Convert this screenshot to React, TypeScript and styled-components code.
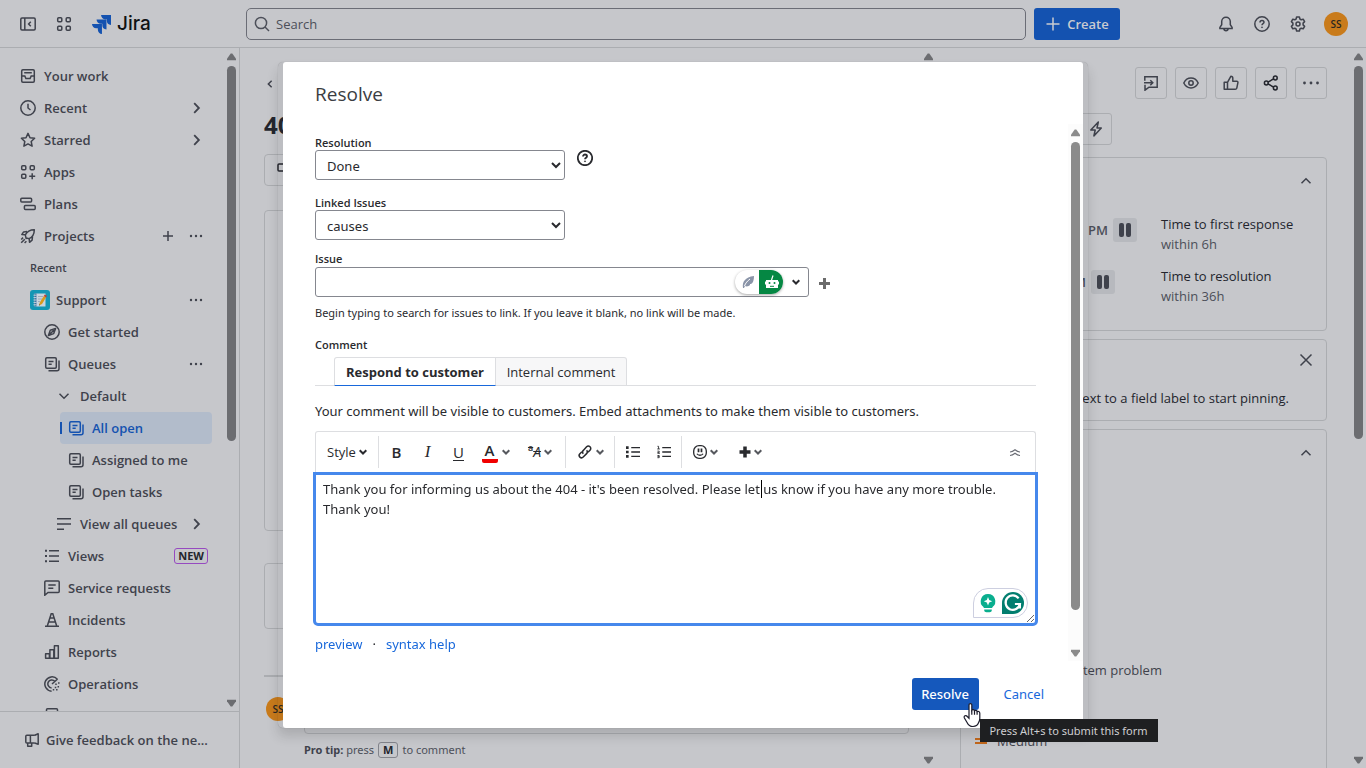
import React from "react";
import styled, { createGlobalStyle } from "styled-components";

const color = {
  page: "#c6c7cb",
  line: "#abadb1",
  text: "#23252d",
  subtle: "#3f424c",
  faint: "#4c4f59",
  blue: "#1452b0",
  orange: "#c97b1b",
  ink: "#292a2e",
  link: "#1868db",
};

const Global = createGlobalStyle`
  * { box-sizing: border-box; }
  body { margin: 0; background: ${color.page}; font-family: "Open Sans", "Noto Sans", sans-serif; font-size: 13px; line-height: 20px; color: ${color.text}; }
  button, input, select, textarea { font: inherit; color: inherit; }
  button { background: none; border: 0; padding: 0; }
  h1, h2, p, ul { margin: 0; padding: 0; }
  ul { list-style: none; }
  svg { display: block; flex: none; }
  a { text-decoration: none; color: ${color.link}; }
`;

/* ---------- icons ---------- */

const Svg = ({ size = 16, children, weight = 1.5, box = 16 }: { size?: number; children: React.ReactNode; weight?: number; box?: number }) => (
  <svg width={size} height={size} viewBox={`0 0 ${box} ${box}`} fill="none" stroke="currentColor" strokeWidth={weight} aria-hidden="true">
    {children}
  </svg>
);

const queue = (
  <>
    <rect x="1.7" y="1.7" width="10.6" height="10.6" rx="1.2" />
    <path d="M4.5 5.4h5M4.5 8.2h3.2M15 4.5v8.3a2 2 0 0 1-2 2H4.5" />
  </>
);

const glyphs: Record<string, React.ReactNode> = {
  collapse: (
    <>
      <rect x="0.8" y="2" width="14.4" height="12" rx="1.2" />
      <path d="M4.8 2v12M10.8 5.8 8.6 8l2.2 2.2" />
    </>
  ),
  grid: (
    <>
      <rect x="1.7" y="1.7" width="4.1" height="4.1" rx="1" />
      <rect x="10.2" y="1.7" width="4.1" height="4.1" rx="1" />
      <rect x="1.7" y="10.2" width="4.1" height="4.1" rx="1" />
      <rect x="10.2" y="10.2" width="4.1" height="4.1" rx="1" />
    </>
  ),
  apps: (
    <>
      <rect x="1.7" y="1.7" width="4.1" height="4.1" rx="1" />
      <rect x="10.2" y="1.7" width="4.1" height="4.1" rx="1" />
      <rect x="1.7" y="10.2" width="4.1" height="4.1" rx="1" />
      <path d="M12.2 9.2v6M9.2 12.2h6" />
    </>
  ),
  search: (
    <>
      <circle cx="7" cy="7" r="5.6" />
      <path d="m11 11 4 4" />
    </>
  ),
  plus: <path d="M8 1.5v13M1.5 8h13" />,
  plusSmall: <path d="M8 3v10M3 8h10" />,
  bell: <path d="M8 1.2a4.3 4.3 0 0 0-4.3 4.3v3.2L1.9 11.4v1h12.2v-1l-1.8-2.7V5.5A4.3 4.3 0 0 0 8 1.2ZM5.8 12.6c.2 1.4 1 2.1 2.2 2.1s2-.7 2.2-2.1" />,
  help: (
    <>
      <circle cx="8" cy="8" r="7.2" />
      <path d="M6 6.4c0-1.1.9-1.9 2-1.9s2 .7 2 1.8C10 7.800 8 7.600 8 9.300" />
      <circle cx="8" cy="11.300" r=".5" fill="currentColor" strokeWidth=".8" />
    </>
  ),
  gear: (
    <>
      <path d="M6.600 1h2.800l.5 2 1.300.8 2-.6 1.400 2.400L13.100 7.100v1.800l1.500 1.500-1.400 2.400-2-.6-1.300.8-.5 2H6.600l-.5-2-1.300-.8-2 .6-1.400-2.400 1.500-1.500V7.100L1.400 5.600l1.400-2.400 2 .6L6.100 3Z" strokeLinejoin="round" />
      <circle cx="8" cy="8" r="2" />
    </>
  ),
  work: (
    <>
      <rect x="1.700" y="1.700" width="12.600" height="12.600" rx="1.200" />
      <path d="M4.200 4.700h7.600M1.700 8h3.100l1.100 2.600h4.200L11.200 8h3.100" />
    </>
  ),
  clock: (
    <>
      <circle cx="8" cy="8" r="7.200" />
      <path d="M8 3.800V8l2.500 2" />
    </>
  ),
  star: <path d="m8 1.400 2 4.300 4.600.6-3.400 3.200.9 4.700L8 11.900l-4.100 2.300.9-4.700L1.400 6.300 6 5.700Z" strokeLinejoin="round" />,
  plans: (
    <>
      <rect x="0.800" y="2.200" width="10.800" height="3.800" rx="1" />
      <rect x="4.400" y="9.600" width="10.800" height="3.800" rx="1" />
    </>
  ),
  rocket: (
    <>
      <path d="M6.100 10.400 5.300 6.900C7 3.400 9.600 1.700 14.300 1.700c0 4.700-1.700 7.300-5.200 9l-3-.8ZM5.300 6.800l-3.500-.2 1.800-2.700 3.400-.3M9.200 10.700l.3 3.600 2.600-2.100.4-3.500" strokeLinejoin="round" />
      <path d="M1.200 14.800l3.600-3.600M1.200 11.500l1.900-1.900M4.600 15l1.800-1.800" />
    </>
  ),
  compass: (
    <>
      <circle cx="8" cy="8" r="7.200" />
      <path d="m11.600 4.400-1.900 5.200-5.300 2 1.900-5.300ZM5 11l5-5" strokeLinejoin="round" />
    </>
  ),
  queue,
  lines: <path d="M1 2.700h14M1 8h14M1 13.300h7" />,
  list: (
    <>
      <path d="M5 2.700h10M5 8h10M5 13.300h10" />
      <path d="M1 2.700h2M1 8h2M1 13.300h2" strokeWidth="2" />
    </>
  ),
  chat: <path d="M1.800.9h12.400c.6 0 1 .4 1 1v9.600c0 .6-.4 1-1 1H4L.8 15.200V1.900c0-.6.4-1 1-1ZM4.300 5h7.400M4.300 8.300h5" />,
  cone: <path d="M1 14.200h14M3.300 14 7.200 1.800h1.600L12.700 14M5.800 6h4.400M4.600 10h6.800" />,
  bars: <path d="M1.600 14.200V9.800h3.800v4.400ZM5.900 14.200V5.800h3.900v8.400ZM10.400 14.200V1.800h3.900v12.400Z" strokeLinejoin="round" />,
  radar: (
    <>
      <path d="M13.400 3.200A7.200 7.200 0 1 0 7.600 15.200M10.800 5.200A4 4 0 1 0 7.600 11.900M8 8l5.600-5" />
      <path d="M14.800 6.300v1.400M12 7.500v1.400M14.300 10v1.400M11.500 10.800v1.400M12.800 13v1.400M9.500 13v1.400" />
    </>
  ),
  form: <rect x="2.500" y="0.800" width="11" height="13" rx="1" />,
  megaphone: <path d="M10.700 3.300 14.200 1.700v10.600l-3.500-1.300M10.700 3.300H2.800c-.6 0-1 .4-1 1V10c0 .6.400 1 1 1h7.900M6.400 3.300v7.700M3.700 11v3.300h4v-3.200" strokeLinejoin="round" />,
  right: <path d="M6.200 3.200 10.900 8l-4.700 4.800" strokeWidth="1.800" />,
  left: <path d="M10.200 3.600 5.800 8l4.400 4.400" />,
  down: <path d="M3.500 5.800 8 10.300l4.500-4.500" />,
  up: <path d="M3.500 10.200 8 5.700l4.500 4.500" />,
  dots: (
    <g fill="currentColor" stroke="none">
      <circle cx="3" cy="8" r="1.200" />
      <circle cx="8" cy="8" r="1.200" />
      <circle cx="13" cy="8" r="1.200" />
    </g>
  ),
  dotsWide: (
    <g fill="currentColor" stroke="none">
      <circle cx="1.500" cy="8" r="1.400" />
      <circle cx="8" cy="8" r="1.400" />
      <circle cx="14.500" cy="8" r="1.400" />
    </g>
  ),
  feedback: <path d="M1.800 5.800v-4h12.400v10.400H6L2 15.200V9.800M1 7.800h8.500M7.300 5.300l2.500 2.500-2.500 2.500" />,
  eye: (
    <>
      <path d="M.8 8c1.600-3.200 4-4.900 7.200-4.900S13.600 4.800 15.200 8c-1.600 3.200-4 4.900-7.200 4.900S2.400 11.200.8 8Z" />
      <circle cx="8" cy="8" r="2.200" />
    </>
  ),
  thumb: <path d="M1.200 7.300h3.300v7H1.200ZM4.500 7.300l3.300-6c1.300 0 2 .8 2 2v2.900h4c.8 0 1.300.7 1.100 1.500l-1.100 5.400c-.2.700-.7 1.200-1.500 1.200H4.500" strokeLinejoin="round" />,
  share: (
    <g color={color.text} stroke="currentColor">
      <circle cx="3.300" cy="8" r="1.900" />
      <circle cx="12.300" cy="3" r="1.900" />
      <circle cx="12.300" cy="13" r="1.900" />
      <path d="m5 7.100 5.600-3.200M5 8.900l5.600 3.200" />
    </g>
  ),
  bolt: <path d="M10.300 1 2.800 9h4.400L5.900 15l7.400-8H9Z" strokeLinejoin="round" />,
  close: <path d="m2.500 2.500 11 11M13.500 2.500l-11 11" />,
};

const Icon = ({ name, size, weight }: { name: string; size?: number; weight?: number }) => (
  <Svg size={size} weight={weight}>{glyphs[name]}</Svg>
);

const Caret = () => (
  <Svg size={8} box={8} weight={2}>
    <path d="M.7 2.300 4 5.500l3.300-3.200" />
  </Svg>
);

/* ---------- scroll bars ---------- */

const Track = styled.div<{ $tint?: string }>`
  display: flex;
  flex-direction: column;
  align-items: center;
  justify-content: space-between;
  flex: none;
  width: 15px;
  padding: 5px 0 4px;
  background: ${(p) => p.$tint || "transparent"};
  color: ${(p) => (p.$tint ? "#8b8b8b" : "#6c6d71")};
`;
const TrackTop = styled.div`
  display: flex;
  flex-direction: column;
  align-items: center;
  flex: 1;
  gap: 5px;
`;
const Thumb = styled.div<{ $share: number }>`
  width: 9px;
  height: ${(p) => p.$share}%;
  border-radius: 5px;
  background: currentColor;
`;
const Arrow = ({ down }: { down?: boolean }) => (
  <svg width="9" height="8" viewBox="0 0 9 8" fill="currentColor" aria-hidden="true">
    <path d={down ? "M0 0.800h9v1.400L5.300 7.400H3.700L0 2.200Z" : "M0 7.200h9V5.800L5.300.6H3.700L0 5.800Z"} />
  </svg>
);
const Scroller = ({ share, tint }: { share: number; tint?: string }) => (
  <Track $tint={tint} aria-hidden="true">
    <TrackTop>
      <Arrow />
      {share > 0 && <Thumb $share={share} />}
    </TrackTop>
    <Arrow down />
  </Track>
);

/* ---------- shell ---------- */

const Shell = styled.div`
  display: flex;
  flex-direction: column;
  height: 100vh;
  overflow: hidden;
  background: ${color.page};
`;
const Top = styled.header`
  display: grid;
  grid-template-columns: 1fr minmax(0, 874px) 1fr;
  align-items: center;
  flex: none;
  height: 48px;
  border-bottom: 1px solid ${color.line};
`;
const TopLeft = styled.div`
  display: flex;
  align-items: center;
  gap: 20px;
  padding-left: 20px;
  color: ${color.subtle};
`;
const Brand = styled.a`
  display: flex;
  align-items: center;
  gap: 6px;
  padding-top: 1px;
  color: #101214;
  font: 500 19px/24px Inter, sans-serif;
`;
const TopMid = styled.div`
  display: flex;
  gap: 8px;
`;
const SearchBox = styled.label`
  display: flex;
  align-items: center;
  gap: 6px;
  flex: 1;
  height: 32px;
  padding: 0 7px;
  border: 1px solid #6b6d76;
  border-radius: 5px;
  color: ${color.faint};
  input {
    flex: 1;
    padding: 0;
    border: 0;
    outline: 0;
    background: none;
  }
  input::placeholder {
    color: ${color.faint};
  }
`;
const Create = styled.button`
  display: flex;
  align-items: center;
  justify-content: center;
  gap: 6px;
  width: 86px;
  height: 32px;
  border-radius: 3px;
  background: ${color.blue};
  color: #c9cbd0;
  font-weight: 600;
`;
const TopRight = styled.div`
  display: flex;
  align-items: center;
  justify-content: flex-end;
  gap: 18px;
  padding-right: 18px;
  color: ${color.subtle};
`;
const TopIcons = styled.div`
  display: flex;
  gap: 20px;
`;
const Avatar = styled.span`
  display: grid;
  place-items: center;
  flex: none;
  width: 24px;
  height: 24px;
  border-radius: 50%;
  background: ${color.orange};
  color: #2b2620;
  font-size: 10px;
  font-weight: 600;
`;
const Columns = styled.div`
  display: flex;
  flex: 1;
  min-height: 0;
`;

/* ---------- sidebar ---------- */

const Side = styled.aside`
  display: flex;
  flex-direction: column;
  flex: none;
  width: 240px;
  border-right: 1px solid ${color.line};
  color: ${color.subtle};
  font-weight: 600;
`;
const SideScroll = styled.div`
  display: flex;
  flex: 1;
  min-height: 0;
`;
const Nav = styled.nav`
  flex: 1;
  min-width: 0;
  overflow: hidden;
  padding: 12px 12px 0;
`;
const Row = styled.li<{ $indent: number; $gap?: number }>`
  display: flex;
  align-items: center;
  height: 32px;
  padding: 0 4px 0 ${(p) => p.$indent}px;
  a {
    display: flex;
    align-items: center;
    gap: ${(p) => p.$gap || 8}px;
    flex: 1;
    color: inherit;
    white-space: nowrap;
  }
`;
const Current = styled(Row)`
  position: relative;
  margin-left: 48px;
  border-radius: 4px;
  background: #b2bccb;
  color: ${color.blue};
  &::before {
    content: "";
    position: absolute;
    left: 0;
    top: 10px;
    width: 2px;
    height: 12px;
    background: currentColor;
  }
`;
const Caption = styled.li`
  height: 32px;
  padding-left: 18px;
  font-size: 11px;
  line-height: 32px;
`;
const Action = styled.button`
  display: grid;
  place-items: center;
  width: 24px;
  height: 24px;
  margin-left: 4px;
`;
const Badge = styled.span`
  padding: 0 3px;
  border: 1px solid #964ac0;
  border-radius: 3px;
  color: ${color.text};
  font-size: 11px;
  font-weight: 700;
  line-height: 14px;
`;
const SideFoot = styled.footer`
  display: flex;
  align-items: center;
  flex: none;
  gap: 6px;
  height: 57px;
  padding-left: 24px;
  border-top: 1px solid ${color.line};
`;

type Item = { label: string; icon: string; indent: number; gap?: number; acts?: string[]; badge?: string };
const head: Item[] = [
  { label: "Your work", icon: "work", indent: 8 },
  { label: "Recent", icon: "clock", indent: 8, acts: ["right"] },
  { label: "Starred", icon: "star", indent: 8, acts: ["right"] },
  { label: "Apps", icon: "apps", indent: 8 },
  { label: "Plans", icon: "plans", indent: 8 },
  { label: "Projects", icon: "rocket", indent: 8, acts: ["plusSmall", "dots"] },
];
const before: Item[] = [
  { label: "Support", icon: "notebook", indent: 18, gap: 6, acts: ["dots"] },
  { label: "Get started", icon: "compass", indent: 32 },
  { label: "Queues", icon: "queue", indent: 32, acts: ["dots"] },
  { label: "Default", icon: "down", indent: 44 },
];
const after: Item[] = [
  { label: "Assigned to me", icon: "queue", indent: 56 },
  { label: "Open tasks", icon: "queue", indent: 56 },
  { label: "View all queues", icon: "lines", indent: 44, acts: ["right"] },
  { label: "Views", icon: "list", indent: 32, badge: "NEW" },
  { label: "Service requests", icon: "chat", indent: 32 },
  { label: "Incidents", icon: "cone", indent: 32 },
  { label: "Reports", icon: "bars", indent: 32 },
  { label: "Operations", icon: "radar", indent: 32 },
  { label: "", icon: "form", indent: 32 },
];

const Notebook = () => (
  <svg width="20" height="20" viewBox="0 0 20 20" aria-hidden="true">
    <rect width="20" height="20" rx="3" fill="#1396b4" />
    <path d="M4.500 3.500h11v13h-11z" fill="#c9d4de" />
    <path d="M4.500 3.500h2v13h-2z" fill="#3b6f9e" />
    <path d="M3.500 5.200h3M3.500 7.600h3M3.500 10h3M3.500 12.400h3M3.500 14.800h3" stroke="#e4e6ea" strokeWidth=".8" />
    <path d="M8 6.500h5M8 9h4M8 11.500h2" stroke="#8b98a8" strokeWidth=".7" />
    <path d="m9 15.500.8-3 4-6.500 2.200 1.400-4 6.500Z" fill="#d99a1c" />
    <path d="m13.800 6 1-1.600 2.200 1.400-1 1.600Z" fill="#b8423a" />
    <path d="m9 15.500.3-1.200.9.600Z" fill="#333" />
  </svg>
);

const NavRow = ({ item }: { item: Item }) => (
  <Row $indent={item.indent} $gap={item.gap}>
    <a href="#" aria-label={item.label || "Forms"}>
      {item.icon === "notebook" ? <Notebook /> : <Icon name={item.icon} />}
      {item.label}
    </a>
    {item.badge && <Badge>{item.badge}</Badge>}
    {item.acts?.map((a) => (
      <Action key={a} aria-label={a}>
        <Icon name={a} />
      </Action>
    ))}
  </Row>
);

const Sidebar = () => (
  <Side>
    <SideScroll>
      <Nav>
        <ul>
          {head.map((i) => <NavRow key={i.label} item={i} />)}
          <Caption>Recent</Caption>
          {before.map((i) => <NavRow key={i.label} item={i} />)}
          <Current $indent={8}>
            <a href="#" aria-current="page">
              <Icon name="queue" />
              All open
            </a>
          </Current>
          {after.map((i) => <NavRow key={i.label} item={i} />)}
        </ul>
      </Nav>
      <Scroller share={58} />
    </SideScroll>
    <SideFoot>
      <Icon name="megaphone" />
      Give feedback on the ne...
    </SideFoot>
  </Side>
);

/* ---------- ticket behind the dialog ---------- */

const Ticket = styled.main`
  flex: 1;
  min-width: 0;
  overflow: hidden;
  padding: 24px 12px 0 24px;
`;
const Back = styled.button`
  display: block;
  width: 12px;
  height: 24px;
  overflow: hidden;
  color: ${color.subtle};
`;
const Title = styled.h1`
  margin: 12px 0;
  font-size: 24px;
  font-weight: 700;
  line-height: 34px;
`;
const Box = styled.section<{ $h: number; $gap: number }>`
  height: ${(p) => p.$h}px;
  margin-bottom: ${(p) => p.$gap}px;
  padding-left: 12px;
  border: 1px solid ${color.line};
  border-radius: 4px;
`;
const BoxIcon = styled.span`
  display: block;
  padding-top: 7px;
`;
const Composer = styled.div`
  display: flex;
  align-items: flex-start;
  gap: 14px;
  height: 58px;
  padding: 20px 0 0 2px;
  border-top: 2px solid ${color.line};
`;
const ComposerBox = styled.div`
  flex: 1;
  height: 37px;
  border: 1px solid ${color.line};
  border-radius: 4px;
`;
const Tip = styled.p`
  display: flex;
  align-items: center;
  gap: 4px;
  margin: 7px 0 0 40px;
  color: ${color.faint};
  font-family: "Noto Sans", sans-serif;
  font-size: 11px;
  b {
    color: ${color.subtle};
  }
`;
const Key = styled.kbd`
  padding: 0 4px;
  border: 1px solid #82848b;
  border-radius: 3px;
  color: ${color.text};
  font: 700 11px/14px "Open Sans", sans-serif;
`;

const Details = styled.section`
  flex: none;
  width: 415px;
  overflow: hidden;
  padding: 19px 24px 0;
`;
const Tools = styled.div<{ $start?: boolean }>`
  display: flex;
  justify-content: ${(p) => (p.$start ? "flex-start" : "flex-end")};
  gap: 8px;
  padding-left: ${(p) => (p.$start ? 120 : 0)}px;
  margin-bottom: ${(p) => (p.$start ? 12 : 14)}px;
`;
const Tool = styled.button`
  display: grid;
  place-items: center;
  width: 32px;
  height: 32px;
  border: 1px solid ${color.line};
  border-radius: 3px;
  color: ${color.subtle};
`;
const Card = styled.section<{ $h: number }>`
  height: ${(p) => p.$h}px;
  margin-bottom: 8px;
  border: 1px solid ${color.line};
  border-radius: 4px;
`;
const CardHead = styled.div<{ $h: number }>`
  display: flex;
  align-items: center;
  justify-content: flex-end;
  height: ${(p) => p.$h}px;
  padding-right: 12px;
  color: ${color.subtle};
`;
const Slas = styled.div`
  display: grid;
  gap: 12px;
  padding-top: 10px;
`;
const Sla = styled.div`
  display: grid;
  grid-template-columns: 185px 1fr;
  margin-left: 15px;
  color: ${color.faint};
  b {
    display: block;
    color: ${color.text};
    font-weight: 400;
  }
`;
const Clock = styled.div<{ $w: number }>`
  display: flex;
  align-items: center;
  justify-content: flex-end;
  align-self: start;
  gap: 5px;
  width: ${(p) => p.$w}px;
  padding-top: 4px;
  font-weight: 600;
`;
const Pause = styled.span`
  display: flex;
  align-items: center;
  justify-content: center;
  gap: 2px;
  width: 24px;
  height: 24px;
  border-radius: 3px;
  background: #b7b9be;
  i {
    width: 5px;
    height: 14px;
    border-radius: 2px;
    background: ${color.subtle};
  }
`;
const Hint = styled.p`
  padding: 8px 37px 0 15px;
  text-align: right;
  white-space: nowrap;
`;
const Fact = styled.p<{ $top: number }>`
  display: flex;
  align-items: center;
  gap: 10px;
  height: 20px;
  margin-top: ${(p) => p.$top}px;
  padding-left: 14px;
  color: ${color.subtle};
`;

/* ---------- dialog ---------- */

const Overlay = styled.div`
  position: fixed;
  inset: 0;
  display: flex;
  justify-content: center;
  align-items: flex-start;
  padding-top: 62px;
`;
const Frame = styled.div`
  width: 810px;
  padding: 0 5px;
  border-radius: 5px;
  background: rgba(30, 31, 33, 0.05);
  box-shadow: 0 8px 12px rgba(30, 31, 33, 0.16), 0 0 1px rgba(30, 31, 33, 0.3);
`;
const Dialog = styled.form`
  border-radius: 3px;
  background: #fff;
  color: ${color.ink};
  font-family: "Noto Sans", "Open Sans", sans-serif;
`;
const DialogTitle = styled.h2`
  padding: 20px 32px 18px;
  color: #3b3d42;
  font-family: "Open Sans", sans-serif;
  font-size: 19px;
  font-weight: 400;
  line-height: 24px;
`;
const DialogBody = styled.div`
  display: flex;
`;
const Fields = styled.div`
  flex: 1;
  min-width: 0;
  padding: 12px 32px 7px;
`;
const Label = styled.label`
  display: block;
  font-family: "Open Sans", sans-serif;
  font-size: 11px;
  font-weight: 600;
  line-height: 14px;
`;
const Line = styled.div<{ $bottom: number }>`
  display: flex;
  gap: 12px;
  margin-bottom: ${(p) => p.$bottom}px;
`;
const Select = styled.select`
  width: 250px;
  height: 30px;
  padding: 2px 0 0 7px;
  border: 1px solid #85878f;
  border-radius: 3px;
  background-color: #fff;
`;
const Picker = styled.div`
  position: relative;
  width: 494px;
  margin-top: 1px;
  input {
    display: block;
    width: 100%;
    height: 30px;
    padding: 0 80px 0 8px;
    border: 1px solid #85878f;
    border-radius: 3px;
    outline: 0;
  }
`;
const PickerExtras = styled.div`
  position: absolute;
  top: 3px;
  right: 9px;
  display: flex;
  align-items: center;
  gap: 9px;
`;
const Pill = styled.span`
  display: flex;
  overflow: hidden;
  height: 24px;
  border-radius: 12px;
  background: #fff;
  box-shadow: 0 1px 3px rgba(0, 0, 0, 0.35);
`;
const AddIssue = styled.button`
  display: grid;
  place-items: center;
  width: 11px;
  margin: 4px 0 0 -2px;
  color: #6b6b6b;
`;
const Helper = styled.p`
  margin: 8px 0 17px;
  font-size: 11px;
  line-height: 16px;
`;
const Tabs = styled.div`
  display: flex;
  height: 29px;
  margin-top: 5px;
  padding-left: 19px;
  border-bottom: 1px solid #dddee1;
  font-family: "Open Sans", sans-serif;
`;
const Tab = styled.button<{ $on?: boolean }>`
  height: 29px;
  width: ${(p) => (p.$on ? 162 : 131)}px;
  border: 1px solid #dddee1;
  border-left-width: ${(p) => (p.$on ? 1 : 0)}px;
  border-bottom-color: ${(p) => (p.$on ? "#1868db" : "#dddee1")};
  border-radius: ${(p) => (p.$on ? "3px 0 0 0" : "0 3px 0 0")};
  background: ${(p) => (p.$on ? "#fff" : "#f7f7f8")};
  font-weight: ${(p) => (p.$on ? 700 : 400)};
`;
const Notice = styled.p`
  margin: 15px 0 10px;
`;
const Toolbar = styled.div`
  display: flex;
  align-items: center;
  height: 41px;
  border: 1px solid #dddee1;
  border-bottom: 0;
  border-radius: 3px 3px 0 0;
`;
const Group = styled.div<{ $pad?: number }>`
  display: flex;
  align-items: center;
  height: 32px;
  padding: 0 ${(p) => p.$pad ?? 2}px;
  & + & {
    border-left: 1px solid #dddee1;
  }
`;
const Format = styled.button<{ $w: number }>`
  display: flex;
  align-items: center;
  justify-content: center;
  gap: 3px;
  width: ${(p) => p.$w}px;
  height: 30px;
  color: ${color.ink};
  font-family: "Open Sans", sans-serif;
  svg:last-child:not(:only-child) {
    color: #56585e;
  }
`;
const Letter = styled.span<{ $kind: "bold" | "italic" | "underline" }>`
  font: ${(p) => (p.$kind === "italic" ? "italic 400 17px/20px 'Liberation Serif', serif" : "600 15px/16px 'Open Sans', sans-serif")};
  font-weight: ${(p) => (p.$kind === "bold" ? 600 : 400)};
  border-bottom: ${(p) => (p.$kind === "underline" ? "1px solid currentColor" : "0")};
`;
const ColorLetter = styled.span`
  width: 16px;
  margin-right: 1px;
  border-bottom: 4px solid #f00000;
  border-radius: 2px;
  font: 600 15px/17px "Open Sans", sans-serif;
`;
const SmallLetter = styled.span`
  display: flex;
  align-items: flex-start;
  text-decoration: line-through;
  font: italic 400 14px/18px "Open Sans", sans-serif;
  sup {
    font: 600 9px/10px "Open Sans", sans-serif;
  }
`;
const Fold = styled.button`
  margin-left: auto;
  padding-right: 14px;
  color: #6b6e76;
`;
const Editor = styled.div`
  position: relative;
  margin: 0 -2px;
  textarea {
    display: block;
    width: 100%;
    height: 154px;
    padding: 4px 7px;
    border: 3px solid #4688ec;
    border-radius: 0 0 5px 5px;
    outline: 0;
    background: #fff;
    resize: both;
  }
`;
const TextCaret = styled.span`
  position: absolute;
  left: 448px;
  top: 8px;
  width: 1px;
  height: 18px;
  background: #000;
`;
const Assist = styled.div`
  position: absolute;
  right: 10px;
  bottom: 8px;
  display: flex;
  align-items: center;
  gap: 5px;
  height: 30px;
  padding: 0 3px 0 5px;
  border: 1px solid #cdcfe0;
  border-radius: 15px 15px 15px 0;
  background: #fff;
`;
const Links = styled.p`
  display: flex;
  gap: 10px;
  margin-top: 8px;
`;
const DialogFoot = styled.footer`
  display: flex;
  align-items: center;
  justify-content: flex-end;
  gap: 25px;
  padding: 17px 39px 18px;
`;
const SubmitWrap = styled.div`
  position: relative;
`;
const Submit = styled.button`
  display: block;
  width: 67px;
  height: 32px;
  border-radius: 3px;
  background: #1558bc;
  color: #fff;
  font-weight: 500;
`;
const Pointer = styled.svg`
  position: absolute;
  left: 51px;
  top: 25px;
  z-index: 2;
`;
const Tooltip = styled.span`
  position: absolute;
  left: 68px;
  top: 41px;
  width: 178px;
  height: 23px;
  background: #1e1f21;
  color: #ceced2;
  font-size: 11px;
  line-height: 23px;
  text-align: center;
  white-space: nowrap;
`;

const message =
  "Thank you for informing us about the 404 - it's been resolved. Please let us know if you have any more trouble.\nThank you!";

const ResolveDialog = () => (
  <Overlay>
    <Frame>
      <Dialog role="dialog" aria-labelledby="dialog-title" onSubmit={(e) => e.preventDefault()}>
        <DialogTitle id="dialog-title">Resolve</DialogTitle>
        <DialogBody>
          <Fields>
            <Label htmlFor="resolution">Resolution</Label>
            <Line $bottom={16}>
              <Select id="resolution" defaultValue="Done">
                <option>Done</option>
              </Select>
              <Icon name="help" weight={1.800} />
            </Line>
            <Label htmlFor="linked">Linked Issues</Label>
            <Line $bottom={12}>
              <Select id="linked" defaultValue="causes">
                <option>causes</option>
              </Select>
            </Line>
            <Label htmlFor="issue">Issue</Label>
            <Line $bottom={0}>
              <Picker>
                <input id="issue" type="text" />
                <PickerExtras>
                  <Pill>
                    <svg width="24" height="24" viewBox="0 0 24 24" aria-hidden="true">
                      <path d="M8 18c-1-6 2-11 11-12 0 4-1 7-3 8l-1 0 0 1c-1 1-3 2-5 1l-1 2Z" fill="#8a94a8" />
                      <path d="M9.500 16c1-3 3-5 5.500-7" stroke="#fff" fill="none" />
                    </svg>
                    <svg width="24" height="24" viewBox="0 0 24 24" aria-hidden="true">
                      <path d="M0 0h24v24H0z" fill="#058743" />
                      <path d="M7 10h12v1.500h1v3h-1V18H7v-3.500H6v-3h1Z" fill="#fff" />
                      <path d="M12.500 10 14 5.500" stroke="#fff" strokeWidth="1.200" />
                      <circle cx="10.500" cy="13" r="1" fill="#058743" />
                      <circle cx="15.500" cy="13" r="1" fill="#058743" />
                      <path d="M11 16.300h4" stroke="#058743" />
                    </svg>
                  </Pill>
                  <Caret />
                </PickerExtras>
              </Picker>
              <AddIssue type="button" aria-label="Add issue">
                <svg width="11" height="11" viewBox="0 0 11 11" aria-hidden="true">
                  <path d="M5.500 0v11M0 5.500h11" stroke="currentColor" strokeWidth="3" />
                </svg>
              </AddIssue>
            </Line>
            <Helper>Begin typing to search for issues to link. If you leave it blank, no link will be made.</Helper>
            <Label htmlFor="comment">Comment</Label>
            <Tabs role="tablist">
              <Tab type="button" role="tab" aria-selected="true" $on>Respond to customer</Tab>
              <Tab type="button" role="tab" aria-selected="false">Internal comment</Tab>
            </Tabs>
            <Notice>Your comment will be visible to customers. Embed attachments to make them visible to customers.</Notice>
            <Toolbar role="toolbar">
              <Group $pad={0}>
                <Format type="button" $w={62}>Style<Caret /></Format>
              </Group>
              <Group>
                <Format type="button" $w={31} aria-label="Bold"><Letter $kind="bold">B</Letter></Format>
                <Format type="button" $w={31} aria-label="Italic"><Letter $kind="italic">I</Letter></Format>
                <Format type="button" $w={31} aria-label="Underline"><Letter $kind="underline">U</Letter></Format>
                <Format type="button" $w={43} aria-label="Text color"><ColorLetter>A</ColorLetter><Caret /></Format>
                <Format type="button" $w={46} aria-label="More formatting"><SmallLetter><sup>a</sup>A</SmallLetter><Caret /></Format>
              </Group>
              <Group $pad={0}>
                <Format type="button" $w={48} aria-label="Link">
                  <Svg size={16}>
                    <path d="M6.300 9.700c-1-1-1-2.300 0-3.300l3.300-3.600c1-1 2.400-1 3.400 0s1 2.400 0 3.400l-2 2M9.600 6.200c1 1 1 2.400 0 3.400L6.200 13.100c-1 1-2.300 1-3.300 0s-1-2.300 0-3.300l2-2" />
                  </Svg>
                  <Caret />
                </Format>
              </Group>
              <Group>
                <Format type="button" $w={31} aria-label="Bullet list">
                  <Svg size={14}>
                    <path d="M6 3h10M6 8h10M6 13h10" />
                    <path d="M0 3h3M0 8h3M0 13h3" strokeWidth="3" />
                  </Svg>
                </Format>
                <Format type="button" $w={31} aria-label="Numbered list">
                  <Svg size={14}>
                    <path d="M6 3h10M6 8h10M6 13h10" />
                    <path d="M.5 1.500h1.300v3M.3 4.500h3M.5 7h2v1.500h-2M.5 9.500h2.800M.5 12h2v2.500h-2M.5 13.300h2" strokeWidth="1" />
                  </Svg>
                </Format>
              </Group>
              <Group>
                <Format type="button" $w={43} aria-label="Emoji">
                  <Svg size={14}>
                    <rect x=".8" y=".8" width="14.400" height="14.400" rx="6" />
                    <path d="M6.300 4v4.200M9.700 4v4.200" strokeWidth="2" />
                    <path d="M4.500 10c1.500 2.300 5.500 2.300 7 0" />
                  </Svg>
                  <Caret />
                </Format>
                <Format type="button" $w={46} aria-label="Insert">
                  <svg width="12" height="12" viewBox="0 0 12 12" aria-hidden="true">
                    <path d="M6 .5v11M.5 6h11" stroke="currentColor" strokeWidth="3.500" />
                  </svg>
                  <Caret />
                </Format>
              </Group>
              <Fold type="button" aria-label="Collapse toolbar">
                <Svg size={12} box={12} weight={1.200}>
                  <path d="M1 6c2-.1 3.500-1 5-2.200 1.500 1.200 3 2.100 5 2.200M1 9.500c2-.1 3.500-1 5-2.200 1.500 1.200 3 2.100 5 2.200" />
                </Svg>
              </Fold>
            </Toolbar>
            <Editor>
              <textarea id="comment" spellCheck={false} defaultValue={message} />
              <TextCaret />
              <Assist>
                <svg width="18" height="20" viewBox="0 0 18 20" aria-hidden="true">
                  <path d="M9 1a7.300 7.300 0 0 0-4.300 13.200V15h8.600v-.8A7.300 7.300 0 0 0 9 1Z" fill="#0aae8e" />
                  <path d="M5.200 16.500h7.600V17c0 1.500-1 2.200-2.200 2.200H7.400c-1.200 0-2.200-.7-2.200-2.200Z" fill="#0aae8e" />
                  <path d="m9 4 1.200 3 3 1.200-3 1.200L9 12.400 7.800 9.400l-3-1.200 3-1.200Z" fill="#fff" />
                </svg>
                <svg width="22" height="22" viewBox="0 0 22 22" aria-hidden="true">
                  <path d="M11 0a11 11 0 1 1 0 22H0V11A11 11 0 0 1 11 0Z" fill="#027e6f" />
                  <path d="M16.600 6.300a7.200 7.200 0 1 0 1.300 5.700h-5M17.900 11.600v4.900" fill="none" stroke="#fff" strokeWidth="2.200" />
                </svg>
              </Assist>
            </Editor>
            <Links>
              <a href="#">preview</a>
              <span>·</span>
              <a href="#">syntax help</a>
            </Links>
          </Fields>
          <Scroller share={90} tint="#fcfcfc" />
        </DialogBody>
        <DialogFoot>
          <SubmitWrap>
            <Submit type="submit">Resolve</Submit>
            <Pointer width="19" height="25" viewBox="0 0 19 25" aria-hidden="true">
              <path
                d="M6 1.800c0-1.600 2.800-1.600 2.800 0v5.400c.5-.9 2.500-.7 2.700.6.700-.8 2.300-.5 2.600.8 1-.6 2.700 0 2.700 1.700v5.200c0 2-.6 3-1.300 4.300-.9 2.700-2.600 3.700-5.500 3.700-3.300 0-4.700-1.300-5.800-3.800L1.400 15c-.9-2 1.400-3.300 2.900-1.500L6 15.300Z"
                fill="#fff"
                stroke="#1b1b2a"
                strokeWidth="1.200"
              />
              <path d="M8.800 7.200v4.500M11.500 8v3.700M14.100 8.800v3" stroke="#1b1b2a" strokeWidth="1.200" />
            </Pointer>
            <Tooltip role="tooltip">Press Alt+s to submit this form</Tooltip>
          </SubmitWrap>
          <a href="#">Cancel</a>
        </DialogFoot>
      </Dialog>
    </Frame>
  </Overlay>
);

export default function App() {
  return (
    <>
      <Global />
      <Shell>
        <Top>
          <TopLeft>
            <Icon name="collapse" />
            <Icon name="grid" />
            <Brand href="#">
              <svg width="19" height="19" viewBox="0 0 24 24" fill={color.blue} aria-hidden="true">
                <path d="M11.571 11.513H0a5.218 5.218 0 0 0 5.232 5.215h2.130v2.057A5.215 5.215 0 0 0 12.575 24V11.513zM17.800 5.757H5.736a5.215 5.215 0 0 0 5.215 5.214h2.129v2.058a5.218 5.218 0 0 0 5.215 5.214V5.757zM23.500 0H11.455a5.215 5.215 0 0 0 5.215 5.215h2.129v2.057A5.215 5.215 0 0 0 24 12.483V0Z" />
              </svg>
              Jira
            </Brand>
          </TopLeft>
          <TopMid>
            <SearchBox>
              <Icon name="search" />
              <input type="search" aria-label="Search" placeholder="Search" />
            </SearchBox>
            <Create>
              <Icon name="plus" />
              Create
            </Create>
          </TopMid>
          <TopRight>
            <TopIcons>
              <Icon name="bell" />
              <Icon name="help" />
              <Icon name="gear" />
            </TopIcons>
            <Avatar>SS</Avatar>
          </TopRight>
        </Top>
        <Columns>
          <Sidebar />
          <Ticket>
            <Back aria-label="Back"><Icon name="left" size={12} weight={2} /></Back>
            <Title>404</Title>
            <Box $h={32} $gap={24}>
              <BoxIcon>
                <Svg><rect x="1" y="2" width="13" height="7" rx="1" /></Svg>
              </BoxIcon>
            </Box>
            <Box $h={321} $gap={32} />
            <Box $h={66} $gap={46} />
            <Composer>
              <Avatar>SS</Avatar>
              <ComposerBox />
            </Composer>
            <Tip>
              <span><b>Pro tip:</b> press</span>
              <Key>M</Key>
              <span>to comment</span>
            </Tip>
          </Ticket>
          <Scroller share={0} />
          <Details>
            <Tools>
              {["feedback", "eye", "thumb", "share", "dotsWide"].map((n) => (
                <Tool key={n} aria-label={n}><Icon name={n} /></Tool>
              ))}
            </Tools>
            <Tools $start>
              <Tool aria-label="Automation"><Icon name="bolt" /></Tool>
            </Tools>
            <Card $h={174}>
              <CardHead $h={46}><Icon name="up" /></CardHead>
              <Slas>
                <Sla>
                  <Clock $w={161}>PM<Pause><i /><i /></Pause></Clock>
                  <div><b>Time to first response</b>within 6h</div>
                </Sla>
                <Sla>
                  <Clock $w={139}>PM<Pause><i /><i /></Pause></Clock>
                  <div><b>Time to resolution</b>within 36h</div>
                </Sla>
              </Slas>
            </Card>
            <Card $h={82}>
              <CardHead $h={40}><Icon name="close" /></CardHead>
              <Hint>next to a field label to start pinning.</Hint>
            </Card>
            <Card $h={400}>
              <CardHead $h={46}><Icon name="up" /></CardHead>
              <Fact $top={184}>
                <Icon name="chat" size={24} />
                Report a system problem
              </Fact>
              <Fact $top={51}>
                <svg width="12" height="8" viewBox="0 0 12 8" aria-hidden="true">
                  <path d="M0 2h12M0 6h12" stroke="#c2681c" strokeWidth="2" />
                </svg>
                Medium
              </Fact>
            </Card>
          </Details>
          <Scroller share={53} />
        </Columns>
      </Shell>
      <ResolveDialog />
    </>
  );
}
